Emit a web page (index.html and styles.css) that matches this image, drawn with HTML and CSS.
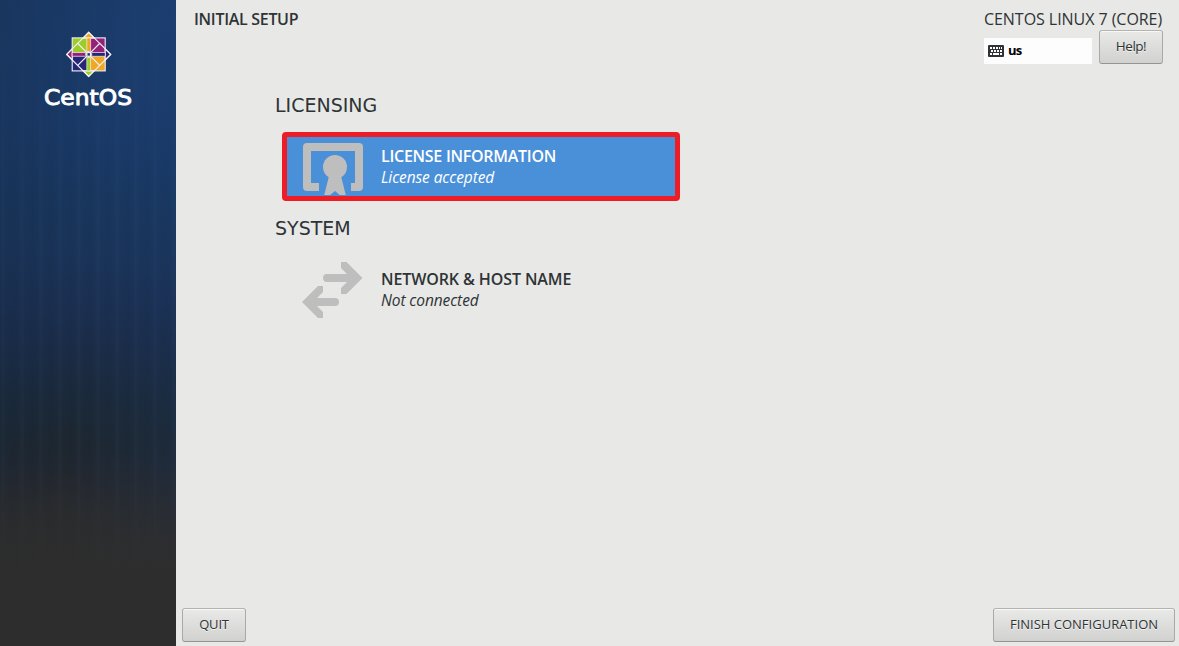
FILE: index.html
```html
<!DOCTYPE html>
<html lang="en">
  <head>
    <title>Initial Setup</title>
    <meta charset="UTF-8">
    <link rel="stylesheet" href="styles.css">
  </head>
  <body>
    <div class="sidebar">
      <svg class="logo" width="92" height="80" viewBox="0 0 92 80">
        <g transform="translate(46.7 24.4)" stroke="#f4f1f7" stroke-width="1.1">
          <rect x="-16.5" y="-16.5" width="16.5" height="16.5" fill="#9ccd2a"/>
          <rect x="0" y="-16.5" width="16.5" height="16.5" fill="#932279"/>
          <rect x="-16.5" y="0" width="16.5" height="16.5" fill="#262577"/>
          <rect x="0" y="0" width="16.5" height="16.5" fill="#efa724"/>
          <path d="M-5.5-16.5 0-22 5.5-16.5Z" fill="#efa724"/>
          <path d="M-5.5 16.5 0 22 5.5 16.5Z" fill="#9ccd2a"/>
          <path d="M-16.5-5.5-22 0-16.5 5.5Z" fill="#932279"/>
          <path d="M16.5-5.5 22 0 16.5 5.5Z" fill="#262577"/>
          <path d="M0-22 11-11 0 0-11-11ZM0 22 11 11 0 0-11 11ZM-22 0-11-11 0 0-11 11ZM22 0 11-11 0 0 11 11Z" fill="none"/>
          <path d="M-1.9-3V-16.5H1.9V-3Z" fill="#efa724" stroke-width=".7"/>
          <path d="M-1.9 3V16.5H1.9V3Z" fill="#9ccd2a" stroke-width=".7"/>
          <path d="M-3-1.9H-16.5V1.9H-3Z" fill="#932279" stroke-width=".7"/>
          <path d="M3-1.9H16.5V1.9H3Z" fill="#262577" stroke-width=".7"/>
          <rect x="-1.8" y="-1.8" width="3.6" height="3.6" fill="#1a3d6e"/>
        </g>
        <text class="brand" x="2" y="74.600" textLength="88" lengthAdjust="spacingAndGlyphs">CentOS</text>
      </svg>
    </div>
    <div class="main">
      <div class="header">
        <div class="title">INITIAL SETUP</div>
        <div class="status">
          <div class="product">CENTOS LINUX 7 (CORE)</div>
          <div class="tools">
            <div class="keyboard">
              <svg width="16" height="12" viewBox="0 0 16 12">
                <rect width="16" height="12" rx="1" fill="#2e3436"/>
                <path d="M2 3h2M5 3h2M8 3h2M11 3h1M13 3h1M3 6h2M6 6h2M9 6h2M12 6h2M2 9h2M5 9h6M12 9h2" stroke="#fff" stroke-width="2"/>
              </svg>
              <span>us</span>
            </div>
            <button class="btn help">Help!</button>
          </div>
        </div>
      </div>
      <div class="content">
        <h2>LICENSING</h2>
        <div class="spoke selected">
          <svg width="60" height="52" viewBox="0 0 60 52">
            <path d="M16 44H4V4h52v40h-8" fill="none" stroke="#bebebe" stroke-width="8" stroke-linejoin="round"/>
            <circle cx="32" cy="24" r="12" fill="#bebebe"/>
            <path d="M26 33h12l5 20h-5l-6-5-6 5h-5z" fill="#bebebe"/>
          </svg>
          <div class="text">
            <div class="name license">LICENSE INFORMATION</div>
            <div class="state">License accepted</div>
          </div>
        </div>
        <h2>SYSTEM</h2>
        <div class="spoke">
          <svg width="61" height="56" viewBox="0 0 61 56">
            <g fill="#bebebe">
              <path d="M25 12H45L39 6V0H44.500L60.500 16 44.500 32H39V26L45 20H25A4 4 0 0 1 25 12Z"/>
              <path d="M33 36H15L21 30V24H16L0 40 16 56H21V50L15 44H33A4 4 0 0 0 33 36Z"/>
            </g>
          </svg>
          <div class="text">
            <div class="name">NETWORK &amp; HOST NAME</div>
            <div class="state">Not connected</div>
          </div>
        </div>
      </div>
      <div class="footer">
        <button class="btn quit">QUIT</button>
        <button class="btn finish">FINISH CONFIGURATION</button>
      </div>
    </div>
  </body>
</html>
```
FILE: styles.css
```css
* {
  box-sizing: border-box;
}

html, body {
  height: 100%;
  margin: 0;
}

body {
  display: flex;
  overflow: hidden;
  background-color: #e8e8e6;
  color: #2e3436;
  font-family: "Open Sans", "Noto Sans", sans-serif;
  font-size: 16px;
}

.sidebar {
  flex: none;
  width: 176px;
  padding: 30px 0 0 42px;
  background:
    linear-gradient(to bottom, rgba(45, 45, 45, 0) 460px, #2d2d2d 570px),
    linear-gradient(100deg, rgba(20, 40, 65, .35), rgba(20, 40, 65, 0) 50%, rgba(28, 72, 140, .16)),
    linear-gradient(to bottom, #1b3d6e 0, rgba(27, 61, 110, 0) 200px),
    repeating-linear-gradient(to right, rgba(90, 130, 160, 0) 0, rgba(90, 130, 160, .05) 3px, rgba(90, 130, 160, 0) 6px, rgba(0, 0, 0, .03) 14px, rgba(0, 0, 0, 0) 19px),
    linear-gradient(to bottom, #1b3d6e 0, #1a3a6a 110px, #19375f 200px, #1a345a 250px, #1b3052 300px, #1b2c48 345px, #1b2939 400px, #1d2731 440px, #22272f 480px, #282a2d 525px, #2d2d2d 570px);
}

.logo {
  display: block;
}

.brand {
  fill: white;
  stroke: white;
  stroke-width: .9px;
  font-family: "DejaVu Sans", sans-serif;
  font-size: 21px;
}

.main {
  flex: 1;
  display: flex;
  flex-direction: column;
}

.header {
  display: flex;
  justify-content: space-between;
  height: 93px;
  padding: 9px 16px 0 18px;
}

.title {
  height: 21px;
  line-height: 21px;
  font-weight: 600;
  letter-spacing: -0.3px;
}

.status {
  width: 179px;
}

.product {
  height: 21px;
  line-height: 21px;
  letter-spacing: -0.05px;
  white-space: nowrap;
}

.tools {
  display: flex;
  justify-content: space-between;
}

.keyboard {
  display: flex;
  align-items: center;
  gap: 4px;
  width: 108px;
  height: 26px;
  margin-top: 8px;
  padding-left: 4px;
  background-color: #fdfdfd;
  color: black;
  font-size: 13px;
  font-weight: 700;
  letter-spacing: -0.7px;
}

.keyboard span {
  padding-bottom: 2px;
}

.btn {
  height: 34px;
  padding: 0 0 2px;
  border: 1px solid #a6a6a3;
  border-color: #b3b3b0 #a9a9a6 #949491;
  border-radius: 3px;
  background: linear-gradient(to bottom, #e9e9e7, #d1d1cf);
  box-shadow: inset 0 1px #f8f8f7;
  color: #2e3436;
  font-family: inherit;
  font-size: 13px;
  text-shadow: 0 1px rgba(255, 255, 255, .7);
}

.help {
  width: 64px;
  font-size: 13.5px;
  letter-spacing: -0.5px;
}

.quit {
  width: 64px;
  letter-spacing: -0.2px;
}

.finish {
  width: 182px;
}

.content {
  flex: 1;
  padding-left: 99px;
}

h2 {
  height: 24px;
  margin: 0;
  font-family: "DejaVu Sans", sans-serif;
  font-size: 19px;
  font-weight: 400;
  line-height: 24px;
}

.spoke {
  display: flex;
  align-items: center;
  gap: 18px;
  width: 398px;
  height: 69px;
  margin: 15px 0 15px 7px;
  padding-left: 20px;
}

.selected {
  align-items: flex-end;
  padding: 0 0 1px 16px;
  border: 5px solid #ee1c25;
  border-radius: 4px;
  background-color: #4a90d9;
  color: white;
}

.name {
  line-height: 21px;
  font-weight: 600;
  letter-spacing: -0.1px;
}

.license {
  letter-spacing: -0.27px;
}

.state {
  line-height: 21px;
  font-size: 15.5px;
  font-style: italic;
  letter-spacing: -0.1px;
}

.selected .text {
  padding-bottom: 7px;
}

.footer {
  display: flex;
  justify-content: space-between;
  padding: 0 4px 4px 6px;
}
```
